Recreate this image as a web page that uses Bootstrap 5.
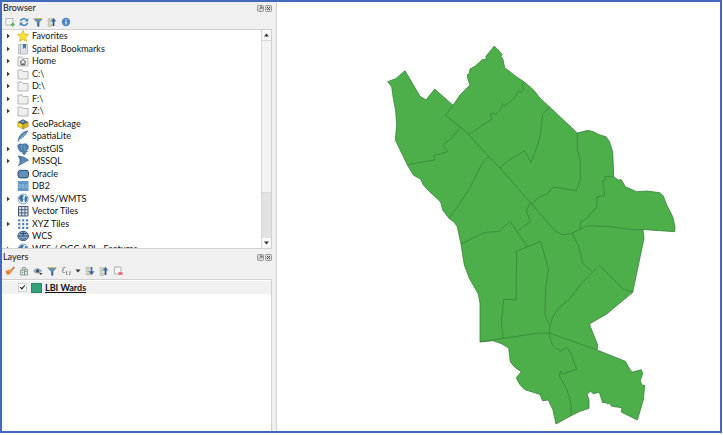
<!DOCTYPE html>
<html lang="en">
<head>
<meta charset="utf-8">
<meta name="viewport" content="width=device-width, initial-scale=1">
<title>LBI Wards</title>
<link href="https://cdn.jsdelivr.net/npm/bootstrap@5.3.0/dist/css/bootstrap.min.css" rel="stylesheet">
<style>
body{font-family:Lato,"Open Sans",sans-serif;font-size:9px;line-height:12px;color:#111;background:#fff;padding:0 1px 2px 0}
.app-frame{border:2px solid #4169c0}
.side{flex:0 0 275px;background:#f0f0f0;border-right:1px solid #d2d2d2}
.pane-browser{flex:249 1 0}
.pane-layers{flex:180 1 0}
.pane-title{font-size:9px;line-height:12px;margin:0;padding:0 4px 0 1px;height:12px;font-weight:400}
.tools{height:15px;padding-left:3px;gap:4px}
.tool{border:0;background:none;padding:0;width:10px;height:10px;line-height:0;flex:none}
.tool-menu{width:6px}
.tool svg,.node-icon{width:100%;height:100%;display:block}
.win-btn{width:7px;height:7px}
.win-gap{gap:1px}
.tree-box{border:1px solid #d0d0d0;border-left:0;background:#fff;margin:0 4px 2px 0}
.tree{display:grid;grid-auto-rows:12px 13px;align-content:start}
.tree li{padding-left:4px}
.twist{border:0;background:none;padding:0;width:5px;height:8px;line-height:0;flex:none}
.twist svg{width:5px;height:8px}
.node-icon{width:12px;height:12px;margin:0 3px 0 6px;flex:none}
.scroller{width:10px;background:#e2e2e2;border-left:1px solid #d8d8d8}
.scroll-btn{border:0;padding:0;background:#fafafa;height:10px;line-height:0}
.thumb{flex:152 1 0;background:#f4f4f4;border:1px solid #d8d8d8;border-width:1px 0}
.track{flex:45 1 0}
.layer-box{background:#fff;border-top:1px solid #d0d0d0;border-right:1px solid #d0d0d0;margin:1px 4px 0 0;padding-top:1px}
.layer-row{background:#f1f1f1;height:13px;padding-left:16px}
.tick{appearance:none;width:9px;height:9px;margin:0 4px 0 0;background:#fff;border:1px solid #d0d0d0;position:relative}
.tick:checked::after{content:"";position:absolute;left:2px;top:0;width:3px;height:5px;border:solid #111;border-width:0 1px 1px 0;transform:rotate(40deg)}
.swatch{width:11px;height:10px;background:#33a07a;border:1px solid #2b8666;margin-right:3px}
.ward-edge{fill:none;stroke:#348137;stroke-width:2.2;stroke-linejoin:round}
</style>
<script src="https://cdn.jsdelivr.net/npm/bootstrap@5.3.0/dist/js/bootstrap.bundle.min.js"></script>
</head>
<body class="vh-100 d-flex">
<svg class="d-none" aria-hidden="true">
  <symbol id="arrow" viewBox="0 0 5 8"><path d="M1 1.700 3.800 4 1 6.300z" fill="#333"/></symbol>
  <symbol id="star" viewBox="0 0 12 12"><path d="M6 .5 7.6 4.2l4 .4-3 2.8.9 4L6 9.3l-3.5 2.1.9-4-3-2.8 4-.4z" fill="#fbe532" stroke="#c9a928" stroke-width=".7"/></symbol>
  <symbol id="bookmark" viewBox="0 0 12 12"><path d="M1.5 1.5h9v9.500h-9z" fill="#dfe3e8" stroke="#a4a8ad" stroke-width=".7"/><path d="M3.500 1.500V11" stroke="#a4a8ad" stroke-width=".7"/><path d="M6 1h3v5L7.500 4.500 6 6z" fill="#3f74ae"/></symbol>
  <symbol id="folder" viewBox="0 0 12 12"><path d="M1 2h4l1 1.500h5V11H1z" fill="#f0f0f0" stroke="#a5a5a5" stroke-width=".8"/></symbol>
  <symbol id="home" viewBox="0 0 12 12"><path d="M1 2h4l1 1.500h5V11H1z" fill="#f0f0f0" stroke="#a5a5a5" stroke-width=".8"/><path d="M3 7.300 6 4.500l3 2.800M4 6.800v3h4v-3M6 10V8" fill="none" stroke="#444" stroke-width=".9"/></symbol>
  <symbol id="gpkg" viewBox="0 0 12 12"><path d="M.8 4v4.500L6 11V6z" fill="#f4d92f" stroke="#85782b" stroke-width=".5"/><path d="M11.200 4v4.500L6 11V6z" fill="#d7b51d" stroke="#85782b" stroke-width=".5"/><path d="M.8 4 6 1.200 11.200 4 6 6.500z" fill="#4c5e68"/><path d="M3.500 3.500 6 2.500l2 1-2 1.500z" fill="#78aacb"/></symbol>
  <symbol id="feather" viewBox="0 0 12 12"><path d="M1 11.500C1.500 6 5 2 11 .8 9 3 7.500 7.500 3 9z" fill="#5587b3" stroke="#355e84" stroke-width=".6"/><path d="M1 11.500 8 3.500" stroke="#dce9f4" stroke-width=".5"/></symbol>
  <symbol id="elephant" viewBox="0 0 12 12"><path d="M.8 2.500C2 .8 4 .8 5.500 1.300 8-.1 11.500 1 11.300 4c0 2-1.300 3-2 3.700l1.300.8-2 .6c0 1.500-.3 2.400-1.600 2.400S5.600 10.200 5.700 8.500L4 9.200C2 8 1 5.500.8 2.500z" fill="#4c7fae" stroke="#305b84" stroke-width=".6"/><path d="M4.500 2c-1 2 .3 3 0 5M8 2.300c-1.300 1-1 2.500.3 2.700L8 8" fill="none" stroke="#a8c7e0" stroke-width=".5"/></symbol>
  <symbol id="mssql" viewBox="0 0 12 12"><path d="M1 1c4 .2 8 1.500 10.500 4.300L7 7.600 1 10.800C4 8 3.500 4 1 1z" fill="#5080ad" stroke="#31587e" stroke-width=".6"/><path d="M5 2.500c1.500 2 1.500 3.500 0 5.500M8 3.500c.7 1.500.6 2 0 3.300" fill="none" stroke="#b5cde1" stroke-width=".3"/></symbol>
  <symbol id="oracle" viewBox="0 0 12 12"><rect x="1" y="2.300" width="10.500" height="7.600" rx="2.500" fill="#648fb9" stroke="#294b6c"/></symbol>
  <symbol id="db2" viewBox="0 0 12 12"><rect x=".8" y="1" width="10.700" height="10" rx=".6" fill="#6498cb"/><path d="M2 4.500h1.500l.8 1v1l-.8 1H2zM5.300 4.500h1.500l.5.700-.5.800.5.800-.5.700H5.300zM5.300 6H7M8.500 5l.8-.5.900.5v.8L8.500 7.500h2" fill="none" stroke="#a9cbe9" stroke-width=".6"/></symbol>
  <symbol id="globe" viewBox="0 0 12 12"><circle cx="6.200" cy="6" r="5" fill="#e7f0f7" stroke="#5682ac" stroke-width=".7"/><path d="M1.500 5 4 2l3 .3L5.500 5l1 1.500L5 9.500 3.500 8zM8 3l2.300 1-.5 4-1.800 1.500-.5-3z" fill="#3e73a7"/></symbol>
  <symbol id="grid" viewBox="0 0 12 12"><path d="M1.500 1.500h9.500v9.500H1.500z" fill="#d8e3ee" stroke="#334b64" stroke-width=".9"/><path d="M4.700 1.500v9.500M7.900 1.500v9.500M1.500 4.700H11M1.500 7.900H11" stroke="#334b64" stroke-width=".8"/></symbol>
  <symbol id="dots" viewBox="0 0 12 12"><path d="M1.200 1.200h2.200v2.200H1.200zM5.100 1.200h2.200v2.200H5.100zM9 1.200h2.200v2.200H9zM1.200 5h2.200v2.200H1.200zM5.100 5h2.200v2.200H5.100zM9 5h2.200v2.200H9zM1.200 8.800h2.200V11H1.200zM5.100 8.800h2.200V11H5.100zM9 8.800h2.200V11H9z" fill="#4f81b4"/></symbol>
  <symbol id="wcs" viewBox="0 0 12 12"><ellipse cx="6.200" cy="6" rx="5.300" ry="4.700" fill="#88a9c9" stroke="#2d5074" stroke-width=".9"/><path d="M1 6h10.500M6.200 1.500v4.500M3 3.500h6.500M3.500 8c1.500 1.500 4 1.500 5.500 0" fill="none" stroke="#264563" stroke-width=".9"/></symbol>
  <symbol id="addlayer" viewBox="0 0 10 10"><path d="M1 1.500h7v6.500H1z" fill="#fafafa" stroke="#999" stroke-width=".7"/><path d="M7.700 5.500v4M5.700 7.500h4" stroke="#5aab55" stroke-width="1.300"/></symbol>
  <symbol id="refresh" viewBox="0 0 10 10"><path d="M1.300 4.300C2 1.500 6 .9 7.800 3M8.700 5.700C8 8.500 4 9.100 2.200 7" fill="none" stroke="#4584c2" stroke-width="1.500"/><path d="M9.300 1v3.500H5.800zM.7 9V5.500h3.500z" fill="#4584c2"/></symbol>
  <symbol id="funnel" viewBox="0 0 10 10"><path d="M.8 1h8.400v1.500L6.200 5.500v4H4v-4l-3.200-3z" fill="#5c8ab8"/><path d="M.8 1h8.400v1.200H.8z" fill="#c9bd66"/><path d="M6.200 5.500v4H5v-4z" fill="#35628e"/></symbol>
  <symbol id="collapse" viewBox="0 0 10 10"><path d="M1 1.500h4v2H1zM1 4.500h2.500v1.800H1zM1 7.500h4v2H1z" fill="#e2d8b2" stroke="#999" stroke-width=".4"/><path d="M6.500 9V4" stroke="#294f78" stroke-width="1.700"/><path d="M6.500.8 9.300 4.500H3.700z" fill="#3c6f9f"/></symbol>
  <symbol id="expand" viewBox="0 0 10 10"><path d="M1 1h4v2H1zM1 4h2.500v1.800H1zM1 7h4v2H1z" fill="#e2d8b2" stroke="#999" stroke-width=".4"/><path d="M6.500 1v5" stroke="#3c6f9f" stroke-width="1.700"/><path d="M6.500 9.300 9.500 5.300h-6z" fill="#356da4"/></symbol>
  <symbol id="info" viewBox="0 0 10 10"><circle cx="5" cy="5" r="4.200" fill="#4d85bd"/><path d="M5 4.300v3.200M5 2.200v1.200" stroke="#fff" stroke-width="1.200"/></symbol>
  <symbol id="brush" viewBox="0 0 10 10"><path d="M9.500 1 5.500 5" stroke="#c46a2b" stroke-width="1.500"/><path d="M5 3.500 6.800 5.500C6 8 3.500 9 1.800 8.500L.5 5z" fill="#ee8b3a"/><path d="m1 5.500 3 2.500" stroke="#c54f2a" stroke-width=".7"/></symbol>
  <symbol id="group" viewBox="0 0 10 10"><path d="M1.500 4h4v5h-4zM5.500 3.500h3V9h-3zM3.500 4V1.500h3v2" fill="#dfe7df" stroke="#788d85" stroke-width=".8"/><path d="M3 6.300h1M6.500 5.500h1" stroke="#457454"/></symbol>
  <symbol id="eye" viewBox="0 0 10 10"><path d="M.5 5C2.500 2 6.500 2 8.500 5 6.500 7.500 2.500 7.500.5 5z" fill="#a9b8c6" stroke="#71808e" stroke-width=".6"/><circle cx="4.600" cy="4.900" r="1.600" fill="#304e6d"/><path d="m6 7 3.500 0-1.700 2z" fill="#333"/></symbol>
  <symbol id="expr" viewBox="0 0 10 10"><path d="M4.500 1.500C1 .8.800 3.500 3 3.800.500 4 .500 7 3.800 6.500M5.500 5v3.500h1M9 5v3.500H8" fill="none" stroke="#777" stroke-width=".9"/></symbol>
  <symbol id="caret" viewBox="0 0 6 10"><path d="M.5 3.500h5L3 6.500z" fill="#333"/></symbol>
  <symbol id="remove" viewBox="0 0 10 10"><path d="M1.500 1h6.500v7H1.500z" fill="#f5f5f5" stroke="#999" stroke-width=".7"/><rect x="5.500" y="6" width="4" height="3" fill="#e77377"/></symbol>
  <symbol id="float" viewBox="0 0 7 7"><rect x=".5" y=".5" width="6" height="6" rx="1" fill="#ddd" stroke="#777" stroke-width=".7"/><path d="M2 4.800 4.800 2M3 2h2v2" fill="none" stroke="#555" stroke-width=".8"/></symbol>
  <symbol id="close" viewBox="0 0 7 7"><rect x=".5" y=".5" width="6" height="6" rx="1" fill="#ddd" stroke="#777" stroke-width=".7"/><path d="m2 2 3 3m0-3L2 5" stroke="#333" stroke-width=".9"/></symbol>
</svg>

<div class="app-frame d-flex flex-fill overflow-hidden">
  <aside class="side d-flex flex-column">
    <section class="pane-browser d-flex flex-column overflow-hidden">
      <div class="pane-title d-flex align-items-center justify-content-between"><span>Browser</span>
        <span class="d-flex win-gap"><button class="tool win-btn" aria-label="Float"><svg><use href="#float"/></svg></button><button class="tool win-btn" aria-label="Close"><svg><use href="#close"/></svg></button></span></div>
      <div class="tools d-flex align-items-center flex-shrink-0">
        <button class="tool" aria-label="Add layer"><svg><use href="#addlayer"/></svg></button>
        <button class="tool" aria-label="Refresh"><svg><use href="#refresh"/></svg></button>
        <button class="tool" aria-label="Filter"><svg><use href="#funnel"/></svg></button>
        <button class="tool" aria-label="Collapse all"><svg><use href="#collapse"/></svg></button>
        <button class="tool" aria-label="Properties"><svg><use href="#info"/></svg></button>
      </div>
      <div class="tree-box d-flex flex-fill overflow-hidden">
        <ul class="tree list-unstyled mb-0 flex-fill overflow-hidden">
          <li class="d-flex align-items-center"><button class="twist" aria-label="Expand"><svg><use href="#arrow"/></svg></button><svg class="node-icon"><use href="#star"/></svg>Favorites</li>
          <li class="d-flex align-items-center"><button class="twist" aria-label="Expand"><svg><use href="#arrow"/></svg></button><svg class="node-icon"><use href="#bookmark"/></svg>Spatial Bookmarks</li>
          <li class="d-flex align-items-center"><button class="twist" aria-label="Expand"><svg><use href="#arrow"/></svg></button><svg class="node-icon"><use href="#home"/></svg>Home</li>
          <li class="d-flex align-items-center"><button class="twist" aria-label="Expand"><svg><use href="#arrow"/></svg></button><svg class="node-icon"><use href="#folder"/></svg>C:\</li>
          <li class="d-flex align-items-center"><button class="twist" aria-label="Expand"><svg><use href="#arrow"/></svg></button><svg class="node-icon"><use href="#folder"/></svg>D:\</li>
          <li class="d-flex align-items-center"><button class="twist" aria-label="Expand"><svg><use href="#arrow"/></svg></button><svg class="node-icon"><use href="#folder"/></svg>F:\</li>
          <li class="d-flex align-items-center"><button class="twist" aria-label="Expand"><svg><use href="#arrow"/></svg></button><svg class="node-icon"><use href="#folder"/></svg>Z:\</li>
          <li class="d-flex align-items-center"><span class="twist"></span><svg class="node-icon"><use href="#gpkg"/></svg>GeoPackage</li>
          <li class="d-flex align-items-center"><span class="twist"></span><svg class="node-icon"><use href="#feather"/></svg>SpatiaLite</li>
          <li class="d-flex align-items-center"><button class="twist" aria-label="Expand"><svg><use href="#arrow"/></svg></button><svg class="node-icon"><use href="#elephant"/></svg>PostGIS</li>
          <li class="d-flex align-items-center"><button class="twist" aria-label="Expand"><svg><use href="#arrow"/></svg></button><svg class="node-icon"><use href="#mssql"/></svg>MSSQL</li>
          <li class="d-flex align-items-center"><span class="twist"></span><svg class="node-icon"><use href="#oracle"/></svg>Oracle</li>
          <li class="d-flex align-items-center"><span class="twist"></span><svg class="node-icon"><use href="#db2"/></svg>DB2</li>
          <li class="d-flex align-items-center"><button class="twist" aria-label="Expand"><svg><use href="#arrow"/></svg></button><svg class="node-icon"><use href="#globe"/></svg>WMS/WMTS</li>
          <li class="d-flex align-items-center"><span class="twist"></span><svg class="node-icon"><use href="#grid"/></svg>Vector Tiles</li>
          <li class="d-flex align-items-center"><button class="twist" aria-label="Expand"><svg><use href="#arrow"/></svg></button><svg class="node-icon"><use href="#dots"/></svg>XYZ Tiles</li>
          <li class="d-flex align-items-center"><span class="twist"></span><svg class="node-icon"><use href="#wcs"/></svg>WCS</li>
          <li class="d-flex align-items-center"><button class="twist" aria-label="Expand"><svg><use href="#arrow"/></svg></button><svg class="node-icon"><use href="#globe"/></svg>WFS / OGC API - Features</li>
        </ul>
        <div class="scroller d-flex flex-column">
          <button class="scroll-btn" aria-label="Scroll up"><svg width="7" height="6" viewBox="0 0 7 6"><path d="M1 4.500h5L3.500 1.500z" fill="#333"/></svg></button>
          <div class="thumb"></div><div class="track"></div>
          <button class="scroll-btn" aria-label="Scroll down"><svg width="7" height="6" viewBox="0 0 7 6"><path d="M1 1.500h5L3.500 4.500z" fill="#333"/></svg></button>
        </div>
      </div>
    </section>
    <section class="pane-layers d-flex flex-column overflow-hidden">
      <div class="pane-title d-flex align-items-center justify-content-between"><span>Layers</span>
        <span class="d-flex win-gap"><button class="tool win-btn" aria-label="Float"><svg><use href="#float"/></svg></button><button class="tool win-btn" aria-label="Close"><svg><use href="#close"/></svg></button></span></div>
      <div class="tools d-flex align-items-center flex-shrink-0">
        <button class="tool" aria-label="Styling"><svg><use href="#brush"/></svg></button>
        <button class="tool" aria-label="Add group"><svg><use href="#group"/></svg></button>
        <button class="tool" aria-label="Map themes"><svg><use href="#eye"/></svg></button>
        <button class="tool" aria-label="Filter legend"><svg><use href="#funnel"/></svg></button>
        <button class="tool" aria-label="Filter by expression"><svg><use href="#expr"/></svg></button>
        <button class="tool tool-menu" aria-label="Filter options"><svg><use href="#caret"/></svg></button>
        <button class="tool" aria-label="Expand all"><svg><use href="#expand"/></svg></button>
        <button class="tool" aria-label="Collapse all"><svg><use href="#collapse"/></svg></button>
        <button class="tool" aria-label="Remove layer"><svg><use href="#remove"/></svg></button>
      </div>
      <div class="layer-box flex-fill">
        <div class="layer-row d-flex align-items-center">
          <input class="tick" type="checkbox" id="wards" checked>
          <span class="swatch"></span>
          <label for="wards" class="fw-bold text-decoration-underline">LBI Wards</label>
        </div>
      </div>
    </section>
  </aside>
  <main class="flex-fill overflow-hidden bg-white">
    <svg class="d-block w-100 h-100" viewBox="277 2 443 429" role="img" aria-label="Map of LBI wards">
      <path d="M387.700 81.700 395.700 78.700 405 70.700 420 96.300 426 100 434.700 89 453 105.300 460 95 470 85 467.500 77.700V74.500L469.300 73.700 470 69 475 66.300 482.700 59.300 486 59.700V56.300L494.300 46 502 54.300 500.700 57 502.700 58.300 504.700 67.700 515 75.700 524.300 82 533.300 89.700 540 98 549.300 106.700 561.700 118.300 577.300 133 588 130.300 594 132 599 134.700 606 136.700 609.300 141.300 612.700 151.700 613.700 176.700 618.300 180 621.300 179.700 625.300 186.700 636.700 191.700 646.700 191 660 192.700 663.300 196 666.700 205 672.700 216.700 675 226.700 674.700 231.700 643 229.500 644 238.300 632.700 292.300 606.700 314 589.300 324 597.700 345 597 350 625.300 361.300 630.700 370.700 632.700 372 641.300 369.700 642.700 373.300 640.300 380.700 641.700 385 644.700 385.300 643.300 400 637.300 420 621.300 412 622 407.700 611.700 406.300 609.300 403.300 607.500 404 606 402.500 602.700 402.700 599.300 392.300 593.300 393.700 590.700 391.300 587 394 589 400V408.300L580 411.300 571 415.700 556 424 553 410 548.300 400 542.700 400.700 539.700 394.300 525 389.700Q519 385 516.300 377.700L521.300 371.700Q513 367 510.300 361.700L508.700 348Q502 343 492.700 340.700L480 342V303.300L478.300 294 469.300 278.300 464.300 265 461 244 457.300 226.700Q455 222 449 218.300L442.700 210 440.700 202 430 192 423.300 185 420.700 179.300 413.300 175 407.300 164.700 395.300 140 396.700 125 395.700 111 393.300 98.300 391.700 86.700z" fill="#4daf4a" stroke="#348137" stroke-width=".8" stroke-linejoin="round"/>
      <g class="ward-edge">
        <g transform="translate(380 35) scale(.33333)">
          <path d="M219 211 196 241 240 276 248 281 266 299 326 365 360 399"/>
          <path d="M266 299 338 250 331 244 333 236 341 234 346 239 368 214 364 208 368 206 373 212Q400 196 408 181L414 167 422 172 433 161 425 152 433 141"/>
          <path d="M240 276Q225 305 188 330L203 350 160 362 164 375 82 389"/>
          <path d="M326 365Q309 376 296 405L274 450"/>
        </g>
        <g transform="translate(500 80) scale(.33333)">
          <path d="M0 264 20 245 74 212 93 247Q118 190 123 150L128 102 152 80"/>
          <path d="M0 264 95 372 150 435Q172 462 190 464L215 460 264 437 330 440 400 449 430 448"/>
          <path d="M232 159V210L241 240V300L229 332 160 321 140 343Q110 350 97 373"/>
          <path d="M341 290H314L316 300 308 303 314 347 291 350 290 383 270 400 266 412 242 426 240 447"/>
        </g>
        <g transform="translate(430 170) scale(.33333)">
          <path d="M124 45Q100 88 57 145"/>
          <path d="M93 222 165 187 207 184 240 154 293 230"/>
          <path d="M301 98 289 123 301 155 265 181"/>
          <path d="M220 505 214 460 221 387 258 390 260 250 256 245 332 214 355 298 347 350 345 430 350 450 359 460"/>
          <path d="M150 515 220 505 320 490 359 489 501 540"/>
        </g>
        <g transform="translate(540 220) scale(.33333)">
          <path d="M97 40 118 85 128 130 156 154"/>
          <path d="M278 217 250 208 178 136 125 190 88 238 58 262Q30 295 28 330Q28 370 48 386L55 386 61 395 79 382 92 398 110 448 68 462 62 453 58 468Q100 530 93 587"/>
        </g>
      </g>
    </svg>
  </main>
</div>
</body>
</html>
